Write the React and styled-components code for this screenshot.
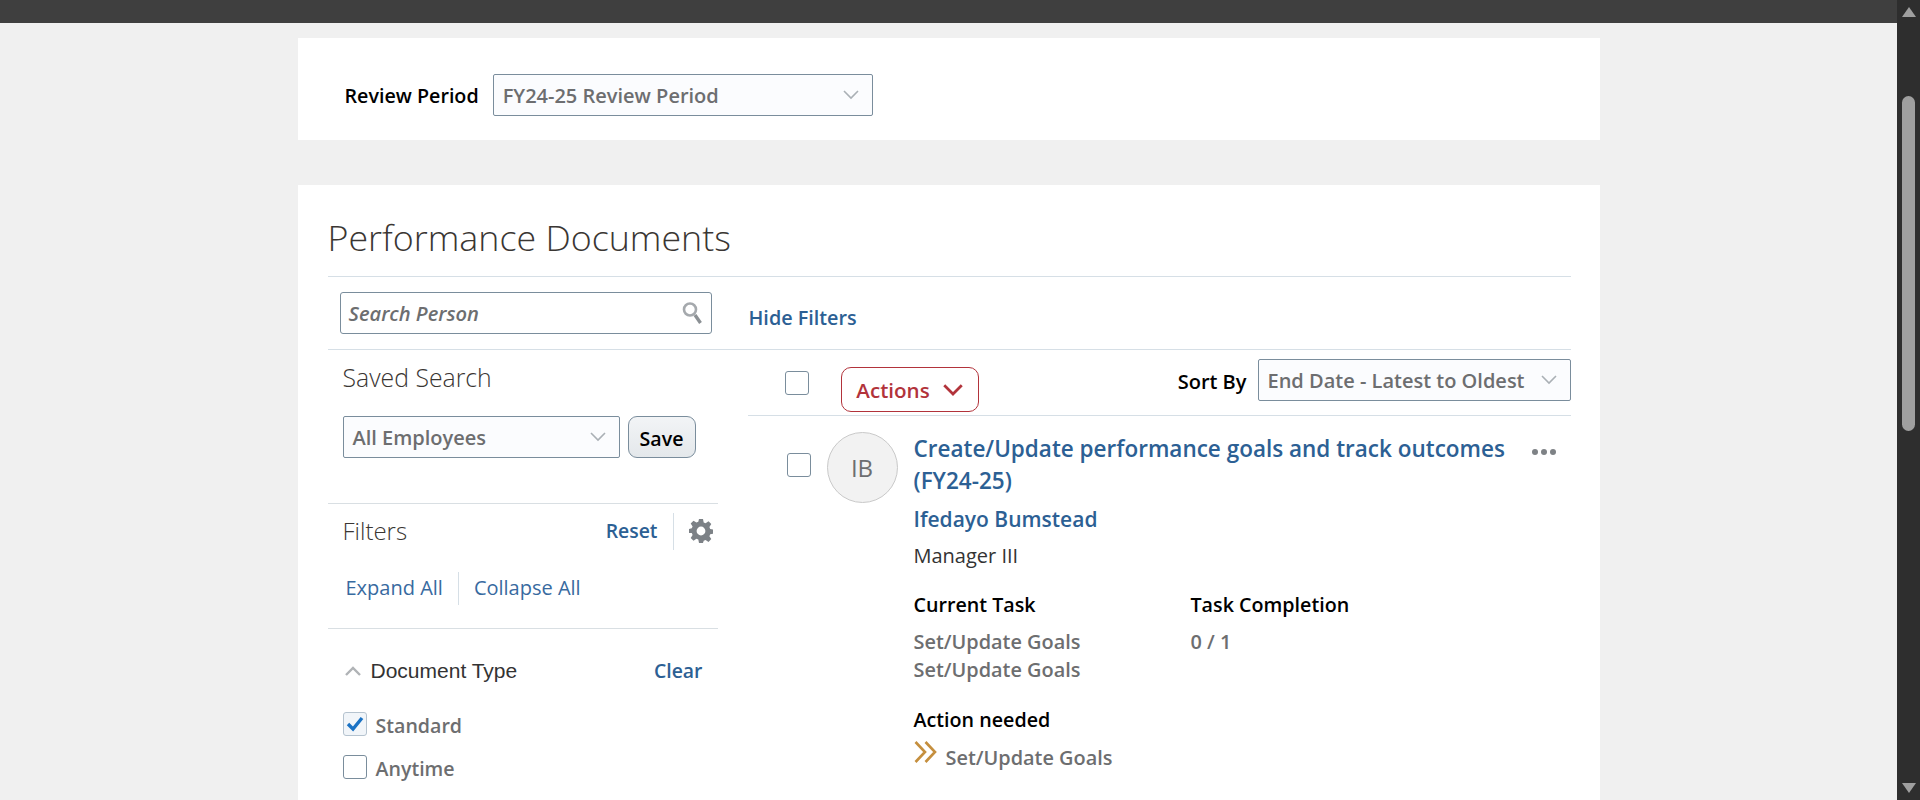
import React from "react";
import styled, { createGlobalStyle } from "styled-components";

const font = `"Open Sans", "Noto Sans", "Liberation Sans", sans-serif`;

const Global = createGlobalStyle`
   html, body {
      margin: 0;
      height: 800px;
      overflow: hidden;
      background: #f0f0f0;
      font-family: ${font};
   }
`;

const Chevron = ({ color = "#aab0b5", up, size = 16, sw = 1.6 }) => (
   <svg width={size} height={size * 0.625} viewBox="0 0 16 10" fill="none">
      <path d={up ? "M1 9 L8 2 L15 9" : "M1 1 L8 8 L15 1"} stroke={color} strokeWidth={sw} />
   </svg>
);

const Gear = () => (
   <svg width="24" height="24" viewBox="0 0 24 24" fill="#7c8186">
      <path
         fillRule="evenodd"
         d="M10 0h4l.7 3.4 1.9.8 2.9-1.9 2.8 2.8-1.9 2.9.8 1.9 3.4.7v4l-3.4.7-.8 1.9 1.9 2.9-2.8 2.8-2.9-1.9-1.9.8L14 24h-4l-.7-3.4-1.9-.8-2.9 1.9-2.8-2.8 1.9-2.9-.8-1.9L-.6 14v-4l3.4-.7.8-1.9L1.7 4.5l2.8-2.8 2.9 1.9 1.9-.8zM12 7.6a4.4 4.4 0 1 0 0 8.8 4.4 4.4 0 0 0 0-8.8z"
      />
   </svg>
);

const SearchGlyph = () => (
   <svg width="21" height="24" viewBox="0 0 21 24" fill="none">
      <circle cx="8" cy="8.5" r="6" stroke="#a5a9ad" strokeWidth="2.6" />
      <path d="M13 14 L18.5 22" stroke="#8b9094" strokeWidth="3.4" />
   </svg>
);

const DoubleChevron = () => (
   <svg width="23" height="22" viewBox="0 0 23 22" fill="none">
      <path d="M1.5 1 L11 11 L1.5 21" stroke="#c58f3e" strokeWidth="2.6" />
      <path d="M11.5 1 L21 11 L11.5 21" stroke="#c58f3e" strokeWidth="2.6" />
   </svg>
);

const Tick = () => (
   <svg width="18" height="16" viewBox="0 0 18 16" fill="none">
      <path d="M2 8 L7 13 L16 2" stroke="#1a72c4" strokeWidth="3.4" />
   </svg>
);

export default function App() {
   return (
      <Shell>
         <Global />
         <Page>
            <TopBar />
            <Content>
               <PeriodCard>
                  <PeriodLabel>Review Period</PeriodLabel>
                  <Select $width="380px">
                     <SelectText>FY24-25 Review Period</SelectText>
                     <Chevron />
                  </Select>
               </PeriodCard>

               <DocsCard>
                  <PageTitle>Performance Documents</PageTitle>
                  <SearchRow>
                     <SearchBox>
                        <SearchText>Search Person</SearchText>
                        <SearchGlyph />
                     </SearchBox>
                     <HideFilters>Hide Filters</HideFilters>
                  </SearchRow>

                  <Columns>
                     <FilterColumn>
                        <SavedTitle>Saved Search</SavedTitle>
                        <SavedRow>
                           <Select $width="277px">
                              <SelectText>All Employees</SelectText>
                              <Chevron />
                           </Select>
                           <SaveButton>Save</SaveButton>
                        </SavedRow>

                        <FiltersHead>
                           <FiltersTitle>Filters</FiltersTitle>
                           <ResetLink>Reset</ResetLink>
                           <VDivider />
                           <Gear />
                        </FiltersHead>
                        <ExpandRow>
                           <LightLink>Expand All</LightLink>
                           <VDivider $height="33px" />
                           <LightLink>Collapse All</LightLink>
                        </ExpandRow>

                        <FilterGroup>
                           <GroupHead>
                              <Chevron up color="#b0b3b6" size={16} sw={2.4} />
                              <GroupTitle>Document Type</GroupTitle>
                              <ClearLink>Clear</ClearLink>
                           </GroupHead>
                           <CheckList>
                              <CheckRow>
                                 <CheckBox $checked>
                                    <Tick />
                                 </CheckBox>
                                 <CheckLabel>Standard</CheckLabel>
                              </CheckRow>
                              <CheckRow>
                                 <CheckBox />
                                 <CheckLabel>Anytime</CheckLabel>
                              </CheckRow>
                           </CheckList>
                        </FilterGroup>
                     </FilterColumn>

                     <ResultColumn>
                        <ResultBar>
                           <BarCheck />
                           <ActionsButton>
                              Actions
                              <Chevron color="#b2333b" size={20} sw={2.2} />
                           </ActionsButton>
                           <SortLabel>Sort By</SortLabel>
                           <SortSelect $width="313px">
                              <SelectText>End Date - Latest to Oldest</SelectText>
                              <Chevron />
                           </SortSelect>
                        </ResultBar>

                        <ResultRow>
                           <RowCheck />
                           <Avatar>IB</Avatar>
                           <RowBody>
                              <DocTitle>
                                 Create/Update performance goals and track outcomes
                                 <br />
                                 (FY24-25)
                              </DocTitle>
                              <PersonName>Ifedayo Bumstead</PersonName>
                              <PersonRole>Manager III</PersonRole>
                              <TaskGrid>
                                 <div>
                                    <FieldLabel>Current Task</FieldLabel>
                                    <FieldValue>Set/Update Goals</FieldValue>
                                    <FieldValue>Set/Update Goals</FieldValue>
                                 </div>
                                 <div>
                                    <FieldLabel>Task Completion</FieldLabel>
                                    <FieldValue>0 / 1</FieldValue>
                                 </div>
                              </TaskGrid>
                              <ActionLabel>Action needed</ActionLabel>
                              <ActionLine>
                                 <ActionIcon>
                                    <DoubleChevron />
                                 </ActionIcon>
                                 <ActionValue>Set/Update Goals</ActionValue>
                              </ActionLine>
                           </RowBody>
                           <MoreDots>
                              <i />
                              <i />
                              <i />
                           </MoreDots>
                        </ResultRow>
                     </ResultColumn>
                  </Columns>
               </DocsCard>
            </Content>
         </Page>
         <ScrollRail>
            <RailArrow />
            <RailThumb />
            <RailArrow $down />
         </ScrollRail>
      </Shell>
   );
}

const Shell = styled.div`
   display: flex;
   height: 800px;
   overflow: hidden;
`;

const Page = styled.div`
   flex: 1;
   min-width: 0;
`;

const TopBar = styled.div`
   height: 23px;
   background-color: #3f3f3f;
`;

const Content = styled.div`
   width: 1302px;
   margin: 15px auto 0;
`;

const PeriodCard = styled.div`
   display: flex;
   align-items: center;
   gap: 14px;
   box-sizing: border-box;
   height: 102px;
   padding: 12px 0 0 47px;
   background: #fff;
`;

const PeriodLabel = styled.span`
   padding-top: 1px;
   font-size: 19.7px;
   line-height: 28px;
   font-weight: 600;
   color: #000;
`;

const Select = styled.div`
   display: flex;
   align-items: center;
   justify-content: space-between;
   box-sizing: border-box;
   width: ${(p) => p.$width};
   height: 42px;
   padding: 0 13px 0 9px;
   background: #fbfcfe;
   border: 1px solid #7a8d9c;
   border-radius: 2px;
`;

const SelectText = styled.span`
   padding-top: 2px;
   font-size: 20px;
   line-height: 28px;
   font-weight: 600;
   color: #6d6e70;
   white-space: nowrap;
`;

const DocsCard = styled.div`
   height: 620px;
   margin-top: 45px;
   padding: 0 29px 0 30px;
   background: #fff;
`;

const PageTitle = styled.h1`
   margin: 0;
   padding: 29px 0 0 0;
   height: 62px;
   font-size: 35.8px;
   line-height: 46px;
   font-weight: 300;
   color: #3a3633;
   border-bottom: 1px solid #d6dfe6;
`;

const SearchRow = styled.div`
   display: flex;
   height: 73px;
   padding: 15px 0 0 12px;
   box-sizing: border-box;
   border-bottom: 1px solid #d6dfe6;
`;

const SearchBox = styled.div`
   display: flex;
   align-items: center;
   justify-content: space-between;
   box-sizing: border-box;
   width: 372px;
   height: 42px;
   padding: 0 8px;
   border: 1px solid #7a8d9c;
   border-radius: 3px;
`;

const SearchText = styled.span`
   padding-top: 2px;
   font-size: 20.1px;
   line-height: 28px;
   font-style: italic;
   font-weight: 600;
   color: #6d6e70;
`;

const HideFilters = styled.a`
   margin: 12px 0 0 37px;
   font-size: 19.8px;
   line-height: 28px;
   font-weight: 600;
   color: #2c6094;
`;

const Columns = styled.div`
   display: flex;
`;

const FilterColumn = styled.div`
   width: 390px;
   margin-right: 30px;
`;

const SavedTitle = styled.div`
   padding: 11px 0 0 15px;
   height: 35px;
   font-size: 24.8px;
   line-height: 32px;
   font-weight: 300;
   color: #3a3633;
`;

const SavedRow = styled.div`
   display: flex;
   gap: 8px;
   margin-top: 20px;
   padding: 0 0 45px 15px;
   border-bottom: 1px solid #d9dfe3;
`;

const SaveButton = styled.button`
   width: 68px;
   height: 42px;
   padding: 2px 0 0;
   font-family: ${font};
   font-size: 19.6px;
   font-weight: 600;
   color: #000;
   background: linear-gradient(#f2f4f6, #e4e8eb);
   border: 1px solid #7a8d9c;
   border-radius: 9px;
`;

const FiltersHead = styled.div`
   display: flex;
   align-items: center;
   height: 46px;
   margin-top: 4px;
   padding: 0 5px 0 15px;
`;

const FiltersTitle = styled.div`
   flex: 1;
   font-size: 24px;
   line-height: 32px;
   font-weight: 300;
   color: #3a3633;
`;

const ResetLink = styled.a`
   font-size: 19.4px;
   line-height: 28px;
   font-weight: 600;
   color: #2c6094;
`;

const VDivider = styled.span`
   display: inline-block;
   width: 1px;
   height: ${(p) => p.$height || "37px"};
   margin: 0 15px;
   background: #d6dfe6;
`;

const ExpandRow = styled.div`
   display: flex;
   align-items: center;
   box-sizing: border-box;
   height: 75px;
   padding: 0 0 6px 18px;
   border-bottom: 1px solid #d9dfe3;
   margin-bottom: 25px;
`;

const LightLink = styled.a`
   font-size: 20px;
   line-height: 28px;
   color: #386a9f;
`;

const FilterGroup = styled.div`
   padding-left: 15px;
`;

const GroupHead = styled.div`
   display: flex;
   align-items: center;
   gap: 10px;
   height: 34px;
   padding-left: 2px;
   padding-right: 15px;
`;

const GroupTitle = styled.span`
   flex: 1;
   font-family: "Liberation Sans", sans-serif;
   font-size: 21px;
   color: #333;
`;

const ClearLink = styled.a`
   font-size: 19.4px;
   line-height: 28px;
   font-weight: 600;
   color: #2c6094;
`;

const CheckList = styled.div`
   margin-top: 14px;
`;

const CheckRow = styled.div`
   display: flex;
   align-items: center;
   gap: 9px;
   height: 43px;
`;

const CheckBox = styled.span`
   display: flex;
   align-items: center;
   justify-content: center;
   box-sizing: border-box;
   width: 24px;
   height: 24px;
   border: 1px solid ${(p) => (p.$checked ? "#b5c3cf" : "#7a8d9c")};
   border-radius: 3px;
   background: ${(p) => (p.$checked ? "#f1f5f9" : "#fff")};
`;

const CheckLabel = styled.span`
   padding-top: 4px;
   font-size: 19.6px;
   line-height: 28px;
   font-weight: 600;
   color: #6d6e70;
`;

const ResultColumn = styled.div`
   flex: 1;
   min-width: 0;
`;

const ResultBar = styled.div`
   display: flex;
   height: 65px;
   border-bottom: 1px solid #d6dfe6;
   padding-left: 37px;
   align-items: flex-start;
`;

const BarCheck = styled(CheckBox)`
   margin-top: 21px;
   margin-right: 32px;
`;

const ActionsButton = styled.button`
   display: flex;
   align-items: center;
   justify-content: center;
   gap: 13px;
   box-sizing: border-box;
   width: 138px;
   height: 45px;
   margin-top: 17px;
   padding: 1px 0 0;
   font-family: ${font};
   font-size: 20.6px;
   font-weight: 600;
   color: #b2333b;
   background: #fff;
   border: 1px solid #b2333b;
   border-radius: 10px;
`;

const SortLabel = styled.span`
   margin: 18px 11px 0 auto;
   font-size: 20px;
   line-height: 28px;
   font-weight: 600;
   color: #000;
`;

const SortSelect = styled(Select)`
   margin-top: 9px;
`;

const ResultRow = styled.div`
   position: relative;
   display: flex;
   padding: 16px 0 0 39px;
`;

const RowCheck = styled(CheckBox)`
   margin-top: 21px;
   margin-right: 16px;
`;

const Avatar = styled.div`
   display: flex;
   align-items: center;
   justify-content: center;
   box-sizing: border-box;
   width: 71px;
   height: 71px;
   font-size: 24px;
   font-weight: 400;
   color: #6d6e70;
   background: #f2f2f2;
   border: 1px solid #c9c9c9;
   border-radius: 50%;
`;

const RowBody = styled.div`
   flex: 1;
   margin-left: 16px;
   padding-top: 1px;
`;

const DocTitle = styled.div`
   font-size: 22.5px;
   line-height: 32px;
   font-weight: 600;
   color: #2c6094;
`;

const PersonName = styled.div`
   margin-top: 7px;
   font-size: 21px;
   line-height: 30px;
   font-weight: 600;
   color: #2c6094;
`;

const PersonRole = styled.div`
   margin-top: 10px;
   font-size: 20px;
   line-height: 24px;
   color: #333;
`;

const TaskGrid = styled.div`
   display: grid;
   grid-template-columns: 277px 1fr;
   margin-top: 25px;
`;

const FieldLabel = styled.div`
   margin-bottom: 11px;
   font-size: 19.7px;
   line-height: 24px;
   font-weight: 600;
   color: #000;
`;

const FieldValue = styled.div`
   font-size: 19.9px;
   line-height: 28px;
   font-weight: 600;
   color: #6d6e70;
`;

const ActionLabel = styled(FieldLabel)`
   margin: 24px 0 7px;
`;

const ActionLine = styled.div`
   display: flex;
   align-items: flex-start;
   gap: 9px;
`;

const ActionIcon = styled.span`
   padding-top: 2px;
`;

const ActionValue = styled(FieldValue)`
   padding-top: 5px;
`;

const MoreDots = styled.div`
   position: absolute;
   top: 33px;
   right: 15px;
   display: flex;
   gap: 3px;

   i {
      width: 6px;
      height: 6px;
      border-radius: 50%;
      background: #7e8286;
   }
`;

const ScrollRail = styled.div`
   display: flex;
   flex-direction: column;
   align-items: center;
   width: 23px;
   background: #2e2e2e;
`;

const RailArrow = styled.div`
   width: 0;
   height: 0;
   margin: ${(p) => (p.$down ? "auto 0 7px" : "7px 0 0")};
   border-left: 7px solid transparent;
   border-right: 7px solid transparent;
   border-${(p) => (p.$down ? "top" : "bottom")}: 10px solid #9f9f9f;
`;

const RailThumb = styled.div`
   width: 13px;
   height: 335px;
   margin-top: 79px;
   background: #9f9f9f;
   border-radius: 7px;
`;
